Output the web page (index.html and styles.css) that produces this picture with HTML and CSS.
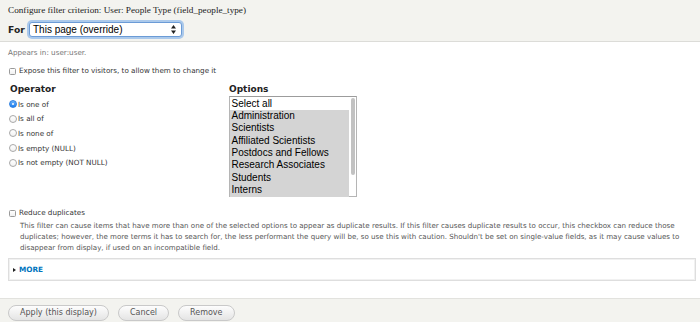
FILE: index.html
```html
<!DOCTYPE html>
<html>
<head>
<meta charset="utf-8">
<link rel="stylesheet" href="styles.css">
</head>
<body>
<div class="header">
  <div class="title">Configure filter criterion: User: People Type (field_people_type)</div>
  <div class="for-row">
    <span class="for-label">For</span>
    <div class="select">
      <span class="select-text">This page (override)</span>
      <svg class="select-arrows" width="5" height="9" viewBox="0 0 5 9"><path d="M2.5 0 L5 3.4 L0 3.4 Z M2.5 9 L5 5.6 L0 5.6 Z" fill="#222"/></svg>
    </div>
  </div>
</div>
<div class="content">
  <div class="appears">Appears in: user:user.</div>
  <div class="check-row"><span class="checkbox"></span><span>Expose this filter to visitors, to allow them to change it</span></div>
  <div class="columns">
    <div class="operator">
      <div class="heading">Operator</div>
      <div class="radio-row"><span class="radio checked"></span><span>Is one of</span></div>
      <div class="radio-row"><span class="radio"></span><span>Is all of</span></div>
      <div class="radio-row"><span class="radio"></span><span>Is none of</span></div>
      <div class="radio-row"><span class="radio"></span><span>Is empty (NULL)</span></div>
      <div class="radio-row"><span class="radio"></span><span>Is not empty (NOT NULL)</span></div>
    </div>
    <div class="options">
      <div class="heading">Options</div>
      <div class="listbox">
        <div class="list-items">
          <div class="opt">Select all</div>
          <div class="opt sel">Administration</div>
          <div class="opt sel">Scientists</div>
          <div class="opt sel">Affiliated Scientists</div>
          <div class="opt sel">Postdocs and Fellows</div>
          <div class="opt sel">Research Associates</div>
          <div class="opt sel">Students</div>
          <div class="opt sel">Interns</div>
        </div>
        <div class="scroll-track"><div class="scroll-thumb"></div></div>
      </div>
    </div>
  </div>
  <div class="check-row reduce"><span class="checkbox"></span><span>Reduce duplicates</span></div>
  <div class="desc">This filter can cause items that have more than one of the selected options to appear as duplicate results. If this filter causes duplicate results to occur, this checkbox can reduce those duplicates; however, the more terms it has to search for, the less performant the query will be, so use this with caution. Shouldn't be set on single-value fields, as it may cause values to disappear from display, if used on an incompatible field.</div>
  <div class="more"><span class="tri"></span><span class="more-text">MORE</span></div>
</div>
<div class="footer">
  <button class="btn">Apply (this display)</button>
  <button class="btn">Cancel</button>
  <button class="btn">Remove</button>
</div>
</body>
</html>
```
FILE: styles.css
```css
html, body {
  margin: 0;
  padding: 0;
  background: #fff;
  width: 700px;
  height: 322px;
  overflow: hidden;
}
body {
  font-family: "DejaVu Sans", sans-serif;
  color: #333;
  display: flex;
  flex-direction: column;
}
.header {
  background: #f3f3ef;
  border-bottom: 1px solid #dcdcd8;
  padding: 4px 8px 4px 8px;
  height: 33px;
}
.title {
  font-family: "Liberation Serif", serif;
  font-size: 9.2px;
  line-height: 12px;
  color: #222;
}
.for-row {
  display: flex;
  align-items: center;
  margin-top: 6px;
  height: 15px;
}
.for-label {
  font-weight: bold;
  font-size: 9.2px;
  color: #222;
  width: 21px;
}
.select {
  width: 153px;
  height: 15px;
  box-sizing: border-box;
  border: 1px solid #6b9bd6;
  border-radius: 3px;
  background: #fff;
  box-shadow: 0 0 0 2px rgba(112, 165, 232, 0.55);
  display: flex;
  align-items: center;
  justify-content: space-between;
  padding: 0 5px 0 3px;
}
.select-text {
  font-family: "Liberation Sans", sans-serif;
  font-size: 10px;
  color: #000;
}
.select-arrows {
  display: block;
}
.content {
  padding: 6px 4px 0 8px;
  flex: 1;
}
.appears {
  font-size: 7.2px;
  line-height: 10px;
  color: #777;
}
.check-row {
  display: flex;
  align-items: center;
  font-size: 7.2px;
  line-height: 10px;
  margin-top: 8px;
  color: #333;
}
.checkbox {
  width: 7px;
  height: 7px;
  box-sizing: border-box;
  border: 1px solid #9a9a9a;
  border-radius: 1.5px;
  background: linear-gradient(#fff, #f0f0f0);
  margin: 0 3px 0 1px;
  flex: none;
}
.columns {
  display: flex;
  margin-top: 7px;
}
.operator {
  width: 221px;
}
.heading {
  font-weight: bold;
  font-size: 9px;
  line-height: 12px;
  color: #222;
  padding-left: 2px;
}
.options .heading {
  padding-left: 0;
}
.operator .heading {
  margin-bottom: 2px;
}
.radio-row {
  display: flex;
  align-items: center;
  height: 14.6px;
  font-size: 7.2px;
  color: #333;
}
.radio {
  width: 8px;
  height: 8px;
  box-sizing: border-box;
  border-radius: 50%;
  border: 1px solid #a8a8a8;
  background: linear-gradient(#fff, #f2f2f2);
  margin: 0 1px 0 1px;
  flex: none;
  position: relative;
}
.radio.checked {
  border-color: #2d7fe0;
  background: linear-gradient(#6cb3fa, #1d7ef0);
}
.radio.checked::after {
  content: "";
  position: absolute;
  left: 2px;
  top: 2px;
  width: 2px;
  height: 2px;
  border-radius: 50%;
  background: #fff;
}
.options {
  display: flex;
  flex-direction: column;
}
.listbox {
  margin-top: 1px;
  width: 128px;
  height: 101px;
  box-sizing: border-box;
  border: 1px solid #b5b5b5;
  border-top-color: #9c9c9c;
  background: #fff;
  display: flex;
}
.list-items {
  width: 119px;
  padding-top: 0.5px;
}
.opt {
  font-family: "Liberation Sans", sans-serif;
  font-size: 10px;
  line-height: 12.4px;
  height: 12.4px;
  color: #000;
  padding-left: 1.5px;
  white-space: nowrap;
}
.opt.sel {
  background: #d4d4d4;
}
.scroll-track {
  flex: 1;
  padding: 1px 0 0 2px;
}
.scroll-thumb {
  width: 4px;
  height: 77px;
  border-radius: 2px;
  background: #c2c2c2;
}
.check-row.reduce {
  margin-top: 11px;
}
.desc {
  font-size: 7.1px;
  line-height: 10.8px;
  color: #555;
  padding-left: 12px;
  width: 674px;
  margin-top: 3px;
}
.more {
  margin-top: 5px;
  height: 23px;
  box-sizing: border-box;
  border: 1px solid #dedede;
  box-shadow: inset 0 0 0 1px #f1f1f1;
  display: flex;
  align-items: center;
  padding-left: 4px;
}
.tri {
  width: 0;
  height: 0;
  border-top: 2.5px solid transparent;
  border-bottom: 2.5px solid transparent;
  border-left: 3.5px solid #222;
  margin-right: 3px;
}
.more-text {
  font-size: 7.3px;
  font-weight: bold;
  color: #0074bd;
}
.footer {
  height: 24px;
  background: #f3f3ef;
  border-top: 1px solid #e2e2de;
  padding: 6px 0 0 8px;
  box-sizing: border-box;
  display: flex;
  align-items: flex-start;
  gap: 9px;
}
.btn {
  font-family: "DejaVu Sans", sans-serif;
  font-size: 8px;
  color: #555;
  height: 16px;
  padding: 0 11px;
  border: 1px solid #c9c9c9;
  border-radius: 10px;
  background: linear-gradient(#fdfdfd, #e4e4e4);
  line-height: 14px;
  margin: 0;
}
```
